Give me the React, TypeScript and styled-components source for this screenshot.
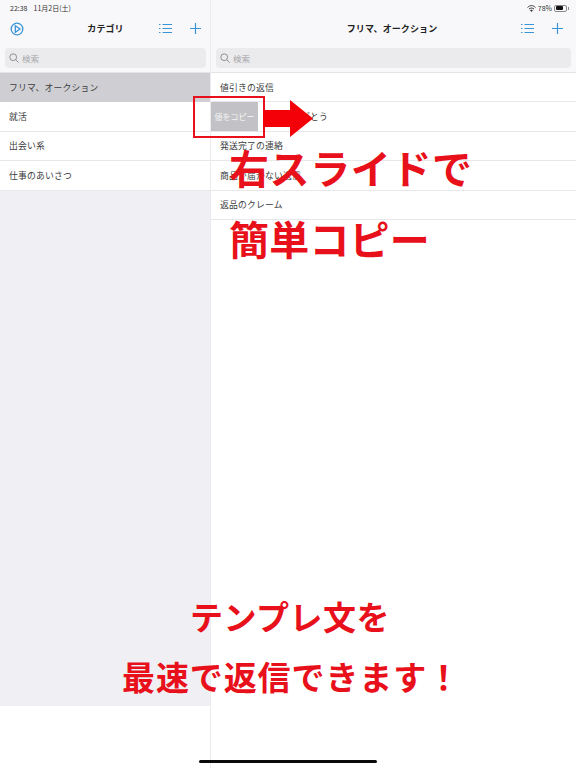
import React from "react"
import styled, { createGlobalStyle } from "styled-components"

const CJK = `"Noto Sans CJK JP", "Noto Sans", sans-serif`
const BLUE = "#3a94d8"
const RED = "#e8101a"

const categories = ["フリマ、オークション", "就活", "出会い系", "仕事のあいさつ"]
const templates = ["値引きの返信", "購入ありがとう", "発送完了の連絡", "商品が届かない返信", "返品のクレーム"]

const GlobalStyle = createGlobalStyle`
  html, body {
    margin: 0;
    padding: 0;
    background: #ffffff;
    font-family: ${CJK};
    overflow: hidden;
  }
`

const Screen = styled.div`
  position: relative;
  width: 576px;
  height: 768px;
  display: flex;
  overflow: hidden;
  background: #ffffff;
`

const Pane = styled.div<{ $width: number }>`
  width: ${(p) => p.$width}px;
  flex-shrink: 0;
  height: 768px;
  display: flex;
  flex-direction: column;
`

const SidePane = styled(Pane)`
  border-right: 1px solid #ececee;
  box-sizing: border-box;
`

const NavBar = styled.div<{ $right: number }>`
  height: 42px;
  flex-shrink: 0;
  box-sizing: border-box;
  padding: 15px ${(p) => p.$right}px 0 10px;
  background: #f8f8fa;
  display: grid;
  grid-template-columns: 1fr auto 1fr;
  align-items: center;
`

const NavStart = styled.div`
  display: flex;
  align-items: center;
`

const NavEnd = styled.div`
  display: flex;
  align-items: center;
  justify-content: flex-end;
  gap: 18px;
`

const NavTitle = styled.div`
  text-align: center;
  font-size: 9px;
  font-weight: 700;
  color: #222222;
  letter-spacing: 0.1px;
`

const SearchRow = styled.div<{ $right: number }>`
  height: 31px;
  flex-shrink: 0;
  box-sizing: border-box;
  padding: 6px ${(p) => p.$right}px 6px 5px;
  background: #f8f8fa;
  border-bottom: 1px solid #e4e4e6;
`

const SearchField = styled.div`
  height: 20px;
  border-radius: 4px;
  background: #ebebed;
  display: flex;
  align-items: center;
  gap: 3px;
  padding-left: 4px;
  font-size: 8.5px;
  color: #a8a8ac;
`

const List = styled.div<{ $fill: string }>`
  height: 633px;
  flex-shrink: 0;
  background: ${(p) => p.$fill};
`

const Row = styled.div<{ $selected?: boolean; $swiped?: boolean }>`
  height: 29.4px;
  box-sizing: border-box;
  padding-left: ${(p) => (p.$swiped ? 54 : 9)}px;
  display: flex;
  align-items: center;
  font-size: 8.8px;
  color: #3c3c40;
  letter-spacing: 0.2px;
  background: ${(p) => (p.$selected ? "#cfcfd3" : "#ffffff")};
  border-bottom: 1px solid ${(p) => (p.$selected ? "#cfcfd3" : "#e8e8ea")};
`

const StatusLeft = styled.div`
  position: absolute;
  top: 3px;
  left: 10px;
  font-size: 7px;
  color: #333333;
  display: flex;
  gap: 6px;
`

const StatusRight = styled.div`
  position: absolute;
  top: 3px;
  right: 9px;
  font-size: 7px;
  color: #333333;
  display: flex;
  align-items: center;
  gap: 2px;
`

const Battery = styled.div`
  position: relative;
  width: 13px;
  height: 7px;
  box-sizing: border-box;
  border: 1px solid #888888;
  border-radius: 2px;
  padding: 0.5px;
  display: flex;

  &::after {
    content: "";
    position: absolute;
    right: -2.5px;
    top: 1px;
    width: 1px;
    height: 3px;
    background: #888888;
  }
`

const BatteryLevel = styled.div`
  height: 100%;
  background: #111111;
  border-radius: 1px;
`

const CopyButton = styled.div`
  position: absolute;
  left: 211px;
  top: 102px;
  width: 47px;
  height: 29px;
  background: #c2c2c6;
  color: #f4f4f4;
  font-size: 8px;
  display: flex;
  align-items: center;
  justify-content: center;
`

const RedBox = styled.div`
  position: absolute;
  left: 193px;
  top: 96px;
  width: 72px;
  height: 42px;
  box-sizing: border-box;
  border: 2px solid ${RED};
`

const Arrow = styled.svg`
  position: absolute;
  left: 263px;
  top: 100px;
`

const Caption = styled.div<{ $left: number; $top: number; $size: number; $spacing: number }>`
  position: absolute;
  left: ${(p) => p.$left}px;
  top: ${(p) => p.$top}px;
  font-size: ${(p) => p.$size}px;
  letter-spacing: ${(p) => p.$spacing}px;
  line-height: 1;
  font-weight: 700;
  color: ${RED};
  white-space: nowrap;
`

const HomeBar = styled.div`
  position: absolute;
  left: 199px;
  top: 760px;
  width: 178px;
  height: 3px;
  border-radius: 2px;
  background: #0a0a0a;
`

const ListIcon = () => (
  <svg width="13" height="11" viewBox="0 0 13 11" fill="none" stroke={BLUE} strokeWidth="1">
    <path d="M0 1.5h1.5M0 5.5h1.5M0 9.5h1.5M3.5 1.5H13M3.5 5.5H13M3.5 9.5H13" />
  </svg>
)

const PlusIcon = () => (
  <svg width="11" height="11" viewBox="0 0 11 11" fill="none" stroke={BLUE} strokeWidth="1.2">
    <path d="M5.5 0v11M0 5.5h11" />
  </svg>
)

const PlayIcon = () => (
  <svg width="14" height="14" viewBox="0 0 14 14" fill="none" stroke={BLUE} strokeWidth="1.3">
    <circle cx="7" cy="7" r="5.8" />
    <path d="M5.3 3.8 10 7l-4.7 3.2z" />
  </svg>
)

const SearchIcon = () => (
  <svg width="10" height="10" viewBox="0 0 10 10" fill="none" stroke="#85858a" strokeWidth="0.9">
    <circle cx="4.2" cy="4.2" r="3.4" />
    <path d="M6.7 6.7 9.6 9.6" />
  </svg>
)

const WifiIcon = () => (
  <svg width="9" height="7" viewBox="0 0 9 7" fill="none" stroke="#333333">
    <path d="M.5 2.6C3-.1 6-.1 8.5 2.6" strokeWidth="1" />
    <path d="M2 4.1c1.5-1.4 3.5-1.4 5 0" strokeWidth="1" />
    <path d="M3.4 5.5c.7-.6 1.5-.6 2.2 0L4.5 6.6z" fill="#333333" strokeWidth="0.6" />
  </svg>
)

const App: React.FC = () => (
  <Screen>
    <GlobalStyle />
    <SidePane $width={211}>
      <NavBar $right={9}>
        <NavStart>
          <PlayIcon />
        </NavStart>
        <NavTitle>カテゴリ</NavTitle>
        <NavEnd>
          <ListIcon />
          <PlusIcon />
        </NavEnd>
      </NavBar>
      <SearchRow $right={4}>
        <SearchField>
          <SearchIcon />
          検索
        </SearchField>
      </SearchRow>
      <List $fill="#efeff4">
        {categories.map((name, i) => (
          <Row key={name} $selected={i === 0}>
            {name}
          </Row>
        ))}
      </List>
    </SidePane>
    <Pane $width={365}>
      <NavBar $right={13}>
        <NavStart />
        <NavTitle>フリマ、オークション</NavTitle>
        <NavEnd>
          <ListIcon />
          <PlusIcon />
        </NavEnd>
      </NavBar>
      <SearchRow $right={5}>
        <SearchField>
          <SearchIcon />
          検索
        </SearchField>
      </SearchRow>
      <List $fill="#ffffff">
        {templates.map((name, i) => (
          <Row key={name} $swiped={i === 1}>
            {name}
          </Row>
        ))}
      </List>
    </Pane>
    <StatusLeft>
      <span>22:38</span>
      <span>11月2日(土)</span>
    </StatusLeft>
    <StatusRight>
      <WifiIcon />
      <span>78%</span>
      <Battery>
        <BatteryLevel style={{ width: "78%" }} />
      </Battery>
    </StatusRight>
    <CopyButton>値をコピー</CopyButton>
    <RedBox />
    <Arrow width="50" height="37" viewBox="0 0 50 37">
      <path d="M0 10h27V0l23 18.5L27 37V27H0z" fill="#f40008" />
    </Arrow>
    <Caption $left={229} $top={147} $size={40} $spacing={0.6}>
      右スライドで
    </Caption>
    <Caption $left={229} $top={218} $size={40} $spacing={0.2}>
      簡単コピー
    </Caption>
    <Caption $left={190} $top={600} $size={33} $spacing={0.5}>
      テンプレ文を
    </Caption>
    <Caption $left={122} $top={660} $size={33} $spacing={0.9}>
      最速で返信できます！
    </Caption>
    <HomeBar />
  </Screen>
)

export default App
